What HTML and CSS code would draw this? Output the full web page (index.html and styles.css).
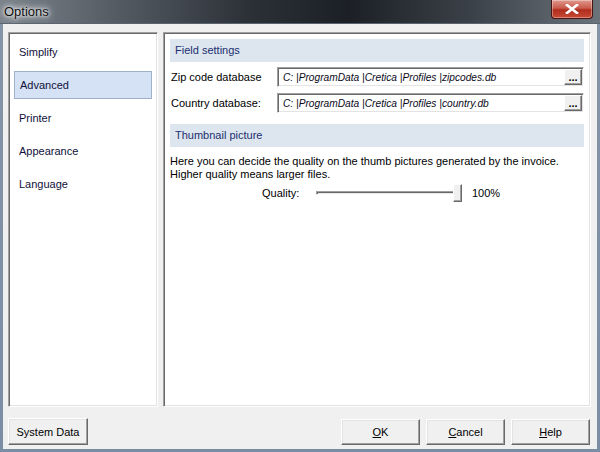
FILE: index.html
```html
<!DOCTYPE html>
<html lang="en">
<head>
    <meta charset="UTF-8">
    <title>Options</title>
    <link rel="stylesheet" href="styles.css">
</head>
<body>
    <div class="window">
        <div class="titlebar">
            <span class="title">Options</span>
            <button class="close" aria-label="Close">
                <svg viewBox="0 0 14 10" width="14" height="10">
                    <path d="M2 1 L12 9 M12 1 L2 9" stroke="#fff" stroke-width="2.6" stroke-linecap="square"/>
                </svg>
            </button>
        </div>

        <div class="frame">
            <div class="client">
                <div class="main">
                    <ul class="nav sunken">
                        <li>Simplify</li>
                        <li class="active">Advanced</li>
                        <li>Printer</li>
                        <li>Appearance</li>
                        <li>Language</li>
                    </ul>

                    <div class="page sunken">
                        <div class="section-head">Field settings</div>

                        <div class="field-row">
                            <label>Zip code database</label>
                            <div class="path-box sunken">
                                <span class="path">C: |ProgramData |Cretica |Profiles |zipcodes.db</span>
                                <button class="browse">...</button>
                            </div>
                        </div>

                        <div class="field-row">
                            <label>Country database:</label>
                            <div class="path-box sunken">
                                <span class="path">C: |ProgramData |Cretica |Profiles |country.db</span>
                                <button class="browse">...</button>
                            </div>
                        </div>

                        <div class="section-head spaced">Thumbnail picture</div>

                        <p class="note">Here you can decide the quality on the thumb pictures generated by the invoice.<br>Higher quality means larger files.</p>

                        <div class="quality-row">
                            <span class="quality-label">Quality:</span>
                            <div class="slider">
                                <div class="track"></div>
                                <div class="thumb"></div>
                            </div>
                            <span class="quality-value">100%</span>
                        </div>
                    </div>
                </div>

                <div class="footer">
                    <button class="btn btn-wide">System Data</button>
                    <div class="footer-right">
                        <button class="btn btn-small"><u>O</u>K</button>
                        <button class="btn btn-small"><u>C</u>ancel</button>
                        <button class="btn btn-small"><u>H</u>elp</button>
                    </div>
                </div>
            </div>
        </div>
    </div>
</body>
</html>
```

FILE: styles.css
```css
:root {
    --face: #f0f0f0;
    --shadow: #a0a0a0;
    --dark-shadow: #696969;
    --light: #e3e3e3;
    --head-bg: #dde6ee;
    --head-text: #1b2f6e;
    --select-bg: #d5e1f5;
    --select-border: #9fb0c9;
}

* {
    margin: 0;
    padding: 0;
    box-sizing: border-box;
}

body {
    width: 600px;
    height: 452px;
    overflow: hidden;
    font-family: "Liberation Sans", Arial, sans-serif;
    font-size: 11px;
    color: #000;
    background: #222;
}

.window {
    display: flex;
    flex-direction: column;
    width: 600px;
    height: 452px;
}

/* title bar */
.titlebar {
    display: flex;
    align-items: flex-start;
    height: 24px;
    background: linear-gradient(to right, #7b838c 0%, #575e66 18%, #2b3037 42%, #1c2026 58%, #3a4047 78%, #6b737b 100%);
    border-bottom: 1px solid #5a6470;
}

.title {
    padding: 4px 0 0 4px;
    font-size: 13px;
    color: #101010;
    text-shadow: 0 0 6px #fff, 0 0 10px #fff, 0 0 3px #fff;
}

.close {
    display: flex;
    align-items: center;
    justify-content: center;
    margin-left: auto;
    margin-right: 7px;
    width: 42px;
    height: 19px;
    border: 1px solid #4a1410;
    border-top: none;
    border-radius: 0 0 4px 4px;
    background: linear-gradient(to bottom, #e09a8e 0%, #c95b4c 45%, #b02d1e 55%, #c84a33 100%);
    box-shadow: inset 0 0 0 1px rgba(255, 255, 255, 0.35);
}

/* window body */
.frame {
    flex: 1;
    display: flex;
    padding: 0 3px 3px;
    background: linear-gradient(to bottom, #8595a8, #7a8da3);
}

.client {
    flex: 1;
    display: flex;
    flex-direction: column;
    padding: 8px 6px 0 5px;
    background: var(--face);
}

.main {
    flex: 1;
    display: flex;
    gap: 5px;
}

.sunken {
    border: 1px solid;
    border-color: var(--shadow) #fff #fff var(--shadow);
    box-shadow: inset 1px 1px 0 var(--dark-shadow), inset -1px -1px 0 var(--light);
    background: #fff;
}

/* left list */
.nav {
    list-style: none;
    width: 150px;
    padding: 5px 5px;
}

.nav li {
    height: 28px;
    line-height: 27px;
    margin-bottom: 5px;
    padding-left: 4px;
    border: 1px solid transparent;
    color: #10103a;
}

.nav li.active {
    background: var(--select-bg);
    border-color: var(--select-border);
    padding-left: 5px;
}

/* right page */
.page {
    flex: 1;
    padding: 6px 6px 0 6px;
}

.section-head {
    height: 23px;
    line-height: 22px;
    padding-left: 5px;
    background: var(--head-bg);
    color: var(--head-text);
    margin-bottom: 5px;
}

.section-head.spaced {
    margin-top: 11px;
    margin-bottom: 5px;
}

.field-row {
    display: flex;
    align-items: center;
    height: 20px;
    margin-bottom: 6px;
}

.field-row label {
    width: 107px;
    padding-left: 1px;
    white-space: nowrap;
}

.path-box {
    flex: 1;
    display: flex;
    align-items: center;
    height: 20px;
    padding: 0 1px 0 5px;
}

.path {
    flex: 1;
    font-size: 10.2px;
    font-style: italic;
    white-space: nowrap;
    color: #0a0a20;
}

.browse {
    width: 18px;
    height: 16px;
    font-family: "Liberation Sans", Arial, sans-serif;
    font-size: 11px;
    font-weight: bold;
    line-height: 10px;
    background: var(--face);
    border: 1px solid;
    border-color: #fff var(--dark-shadow) var(--dark-shadow) #fff;
    box-shadow: inset -1px -1px 0 var(--shadow);
}

.note {
    line-height: 13px;
    padding: 3px 0 0 0;
}

.quality-row {
    display: flex;
    align-items: center;
    margin-top: 2px;
    height: 20px;
}

.quality-label {
    margin-left: 92px;
    width: 54px;
}

.slider {
    position: relative;
    width: 146px;
    height: 18px;
}

.track {
    position: absolute;
    left: 0;
    right: 0;
    top: 7px;
    height: 4px;
    border: 1px solid;
    border-color: var(--shadow) #fff #fff var(--shadow);
    box-shadow: inset 1px 1px 0 var(--dark-shadow);
    background: #e8e8e8;
}

.thumb {
    position: absolute;
    right: 0;
    top: 0;
    width: 9px;
    height: 18px;
    background: var(--face);
    border: 1px solid;
    border-color: #fff var(--dark-shadow) var(--dark-shadow) #fff;
    box-shadow: inset -1px -1px 0 var(--shadow);
}

.quality-value {
    margin-left: 10px;
}

/* bottom buttons */
.footer {
    display: flex;
    align-items: center;
    height: 42px;
    padding-top: 7px;
}

.footer-right {
    display: flex;
    gap: 6px;
    margin-left: auto;
    margin-right: 1px;
}

.btn {
    height: 27px;
    padding: 0;
    font-family: "Liberation Sans", Arial, sans-serif;
    font-size: 11px;
    color: #000;
    background: var(--face);
    border: 1px solid;
    border-color: #fff var(--dark-shadow) var(--dark-shadow) #fff;
    box-shadow: inset -1px -1px 0 var(--shadow), inset 1px 1px 0 var(--light);
}

.btn-wide {
    width: 80px;
}

.btn-small {
    width: 79px;
    height: 26px;
}
```
